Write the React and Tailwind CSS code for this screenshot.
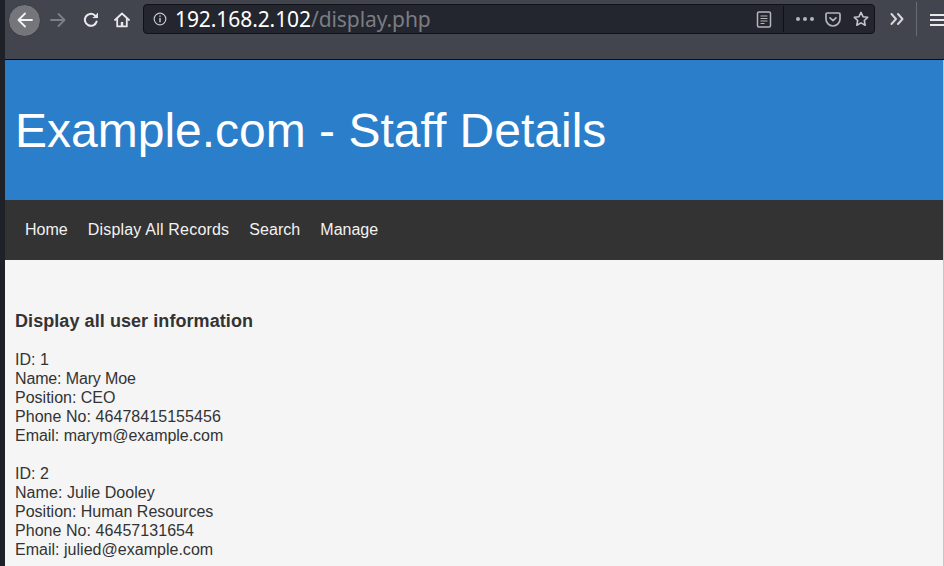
const navLinks = [
  { label: "Home", cls: "" },
  { label: "Display All Records", cls: "tracking-[0.2px]" },
  { label: "Search", cls: "tracking-[0.05px]" },
  { label: "Manage", cls: "" },
];

const staff = [
  { id: 1, name: "Mary Moe", nameCls: "tracking-[-0.14px]", position: "CEO", phone: "46478415155456", phoneCls: "tracking-[0.05px]", email: "marym@example.com", emailCls: "tracking-[-0.04px]" },
  { id: 2, name: "Julie Dooley", nameCls: "tracking-[0.06px]", position: "Human Resources", phone: "46457131654", phoneCls: "tracking-[0.05px]", email: "julied@example.com", emailCls: "tracking-[0.02px]" },
];

function BackIcon() {
  return (
    <svg width="18" height="18" viewBox="0 0 18 18" fill="none" stroke="#f2f3f5" strokeWidth="1.8" strokeLinecap="round" strokeLinejoin="round">
      <path d="M16 9H2.500M9 2.500 2.500 9 9 15.500" />
    </svg>
  );
}

function ForwardIcon() {
  return (
    <svg width="18" height="18" viewBox="0 0 18 18" fill="none" stroke="#7c7f86" strokeWidth="1.8" strokeLinecap="round" strokeLinejoin="round">
      <path d="M2 9h13.500M9.500 3l6 6-6 6" />
    </svg>
  );
}

function ReloadIcon() {
  return (
    <svg width="16" height="16" viewBox="0 0 16 16" fill="none" stroke="#e8e9eb" strokeWidth="2" strokeLinecap="round" strokeLinejoin="round">
      <path d="M13.600 9.600A6 6 0 1 1 11.700 3.200L14 5" />
      <path d="M14.400 1.400V5.600H10.200" fill="#e8e9eb" strokeWidth="1" />
    </svg>
  );
}

function HomeIcon() {
  return (
    <svg width="16" height="16" viewBox="0 0 16 16" fill="none" stroke="#e8e9eb" strokeWidth="1.8" strokeLinejoin="round" strokeLinecap="round">
      <path d="M1 8 8 1.500 15 8" />
      <path d="M3.200 7v7.400h9.600V7" />
      <rect x="6.800" y="10" width="2.400" height="4.400" fill="#e8e9eb" stroke="none" />
    </svg>
  );
}

function InfoIcon() {
  return (
    <svg width="14" height="14" viewBox="0 0 14 14" fill="none" stroke="#c4c5c9" strokeWidth="1.2" strokeLinecap="round">
      <circle cx="7" cy="7" r="5.800" />
      <path d="M7 6.400v3.400" strokeWidth="1.500" />
      <path d="M7 4v.3" strokeWidth="1.500" />
    </svg>
  );
}

function ReaderIcon() {
  return (
    <svg width="16" height="17" viewBox="0 0 16 17" fill="none" stroke="#b4b6ba" strokeWidth="1.500">
      <rect x="1.500" y="1" width="13" height="15" rx="1.500" />
      <path d="M4.500 5h7M4.500 7.500h7M4.500 10h7M4.500 12.500h4" strokeWidth="1.200" />
    </svg>
  );
}

function PocketIcon() {
  return (
    <svg width="16" height="15" viewBox="0 0 16 15" fill="none" stroke="#b4b6ba" strokeWidth="1.700" strokeLinecap="round" strokeLinejoin="round">
      <path d="M2.300 1h11.400A1.300 1.300 0 0 1 15 2.300V7A7 7 0 0 1 1 7V2.300A1.300 1.300 0 0 1 2.300 1Z" />
      <path d="M5 5.800l3 2.800 3-2.800" />
    </svg>
  );
}

function StarIcon() {
  return (
    <svg width="16" height="16" viewBox="0 0 16 16" fill="none" stroke="#c4c5c9" strokeWidth="1.600" strokeLinejoin="round">
      <path d="M8 1.400l2 4.300 4.700.6-3.400 3.200.9 4.700L8 11.900l-4.200 2.300.9-4.700L1.300 6.300 6 5.700Z" />
    </svg>
  );
}

function OverflowIcon() {
  return (
    <svg width="14" height="12" viewBox="0 0 14 12" fill="none" stroke="#d8d9dc" strokeWidth="1.900" strokeLinecap="round" strokeLinejoin="round">
      <path d="M1.500 1 6 6l-4.500 5M8 1l4.500 5L8 11" />
    </svg>
  );
}

function BrowserBar() {
  return (
    <div className="h-[60px] shrink-0 bg-[#43454e] border-b border-[#0c0c0d] pt-[3px] flex items-start">
      <div className="flex items-center h-[34px]">
        <button className="ml-[3px] w-[33px] h-[33px] rounded-full bg-[#74767c] border border-[#3a3b42] flex items-center justify-center">
          <BackIcon />
        </button>
        <span className="ml-[8px] flex"><ForwardIcon /></span>
        <span className="ml-[16px] flex"><ReloadIcon /></span>
        <span className="ml-[15px] flex"><HomeIcon /></span>
      </div>
      <div className="ml-[13px] mt-[1px] w-[734px] h-[30px] rounded-[4px] bg-[#24262f] border border-[#111216] flex items-center">
        <span className="ml-[9px] flex"><InfoIcon /></span>
        <div className="ml-[8px] text-[21px] leading-none text-white font-['Noto_Sans',sans-serif] tracking-[-0.08px]">
          192.168.2.102<span className="text-[#7b7d84]">/display.php</span>
        </div>
        <div className="ml-auto flex items-center">
          <ReaderIcon />
          <span className="ml-[11px] w-px h-[26px] bg-[#0f1013]" />
          <div className="ml-[12px] flex gap-[3px]">
            <span className="w-[4px] h-[4px] rounded-full bg-[#b4b6ba]" />
            <span className="w-[4px] h-[4px] rounded-full bg-[#b4b6ba]" />
            <span className="w-[4px] h-[4px] rounded-full bg-[#b4b6ba]" />
          </div>
          <span className="ml-[11px] flex"><PocketIcon /></span>
          <span className="ml-[12px] mr-[5px] flex"><StarIcon /></span>
        </div>
      </div>
      <span className="ml-[15px] mt-[10px] flex"><OverflowIcon /></span>
      <span className="ml-[12px] mt-[-1px] w-px h-[34px] bg-[#6a6c72]" />
      <div className="ml-[13px] mt-[11px] w-[14px] flex flex-col gap-[3px]">
        <span className="h-[2px] bg-[#e8e9eb]" />
        <span className="h-[2px] bg-[#e8e9eb]" />
        <span className="h-[2px] bg-[#e8e9eb]" />
      </div>
    </div>
  );
}

export default function App() {
  return (
    <div className="w-[944px] h-[566px] overflow-hidden flex bg-[#f5f5f5] font-['Liberation_Sans',Arial,sans-serif]">
      <div className="w-[5px] shrink-0 bg-[#1f2129]" />
      <div className="flex-1 min-w-0 flex flex-col">
        <BrowserBar />
        <div className="flex-1 min-h-0 border-r border-[#c4c6ca]">
          <header className="h-[140px] bg-[#2b7ec9] flex items-center pl-[10px] pt-[2px]">
            <h1 className="text-[48px] leading-none text-white">Example.com - Staff Details</h1>
          </header>
          <nav className="h-[60px] bg-[#333333] flex items-center pl-[20px] gap-[20px]">
            {navLinks.map((link) => (
              <a key={link.label} className={`text-[16px] text-[#f2f2f2] ${link.cls}`}>{link.label}</a>
            ))}
          </nav>
          <main className="pl-[10px] pt-[51px] text-[16px] leading-[19px] text-[#333333]">
            <h3 className="text-[18px] leading-[21px] font-bold mb-[18px] tracking-[0.07px]">Display all user information</h3>
            {staff.map((person) => (
              <div key={person.id} className="mb-[19px]">
                <div>ID: {person.id}</div>
                <div className={person.nameCls}>Name: {person.name}</div>
                <div>Position: {person.position}</div>
                <div className={person.phoneCls}>Phone No: {person.phone}</div>
                <div className={person.emailCls}>Email: {person.email}</div>
              </div>
            ))}
          </main>
        </div>
      </div>
    </div>
  );
}
